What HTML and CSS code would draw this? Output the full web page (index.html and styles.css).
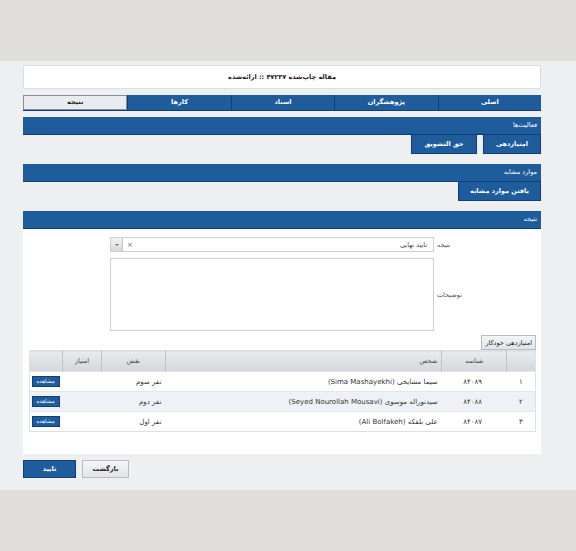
FILE: index.html
```html
<!DOCTYPE html>
<html lang="fa" dir="rtl">
<head>
    <meta charset="UTF-8">
    <title>مقاله چاپ‌شده</title>
    <link rel="stylesheet" href="styles.css">
</head>
<body>
    <div class="page">
        <div class="wrap">
            <div class="title">مقاله چاپ‌شده ۴۷۲۳۷ :: ارائه‌شده</div>

            <div class="tabs">
                <div class="tab">اصلی</div>
                <div class="tab">پژوهشگران</div>
                <div class="tab">اسناد</div>
                <div class="tab">کارها</div>
                <div class="tab active">نتیجه</div>
            </div>

            <div class="section">
                <div class="sec-head">فعالیت‌ها</div>
                <div class="actions">
                    <button class="btn-blue w58">امتیازدهی</button>
                    <button class="btn-blue w66">حق التشویق</button>
                </div>
            </div>

            <div class="section">
                <div class="sec-head">موارد مشابه</div>
                <div class="actions">
                    <button class="btn-blue w83">یافتن موارد مشابه</button>
                </div>
            </div>

            <div class="section">
                <div class="sec-head">نتیجه</div>
                <div class="panel">
                    <div class="form-row">
                        <label class="lbl">نتیجه</label>
                        <div class="select">
                            <span class="sel-text">تایید نهایی</span>
                            <span class="sel-clear">×</span>
                            <span class="sel-arrow"></span>
                        </div>
                    </div>
                    <div class="form-row">
                        <label class="lbl">توضیحات</label>
                        <textarea class="notes"></textarea>
                    </div>

                    <div class="auto-row">
                        <button class="btn-light">امتیازدهی خودکار</button>
                    </div>

                    <table class="grid">
                        <thead>
                            <tr>
                                <th class="c-num"></th>
                                <th class="c-id">شناسه</th>
                                <th class="c-person">شخص</th>
                                <th class="c-role">نقش</th>
                                <th class="c-score">امتیاز</th>
                                <th class="c-act"></th>
                            </tr>
                        </thead>
                        <tbody>
                            <tr>
                                <td class="c-num">۱</td>
                                <td class="c-id">۸۴۰۸۹</td>
                                <td>سیما مشایخی (Sima Mashayekhi)</td>
                                <td>نفر سوم</td>
                                <td></td>
                                <td class="c-act"><button class="view">مشاهده</button></td>
                            </tr>
                            <tr class="alt">
                                <td class="c-num">۲</td>
                                <td class="c-id">۸۴۰۸۸</td>
                                <td>سیدنوراله موسوی (Seyed Nourollah Mousavi)</td>
                                <td>نفر دوم</td>
                                <td></td>
                                <td class="c-act"><button class="view">مشاهده</button></td>
                            </tr>
                            <tr>
                                <td class="c-num">۳</td>
                                <td class="c-id">۸۴۰۸۷</td>
                                <td>علی بلفکه (Ali Bolfakeh)</td>
                                <td>نفر اول</td>
                                <td></td>
                                <td class="c-act"><button class="view">مشاهده</button></td>
                            </tr>
                        </tbody>
                    </table>
                </div>
            </div>

            <div class="footer">
                <button class="btn-light back">بازگشت</button>
                <button class="btn-blue ok">تایید</button>
            </div>
        </div>
    </div>
</body>
</html>
```

FILE: styles.css
```css
:root {
    --blue: #1e5c9c;
    --blue-dark: #0e3f78;
    --text: #333;
}

* {
    box-sizing: border-box;
    font-family: 'DejaVu Sans', sans-serif;
}

body {
    margin: 0;
    background: #e0dfdb;
    color: var(--text);
}

.page {
    margin-top: 61px;
    height: 429px;
    background: #eeeff0;
    padding: 4px 35px 0 23px;
}

.title {
    height: 24px;
    line-height: 22px;
    background: #fff;
    border: 1px solid #d6dee8;
    border-radius: 2px;
    text-align: center;
    font-size: 6.5px;
    font-weight: bold;
    color: #222;
}

/* تب‌ها */
.tabs {
    display: flex;
    margin-top: 6px;
    height: 16px;
    background: var(--blue);
    border-bottom: 1px solid var(--blue-dark);
}

.tab {
    flex: 1;
    text-align: center;
    font-size: 6.5px;
    font-weight: bold;
    line-height: 15px;
    color: #fff;
    border-left: 1px solid var(--blue-dark);
}

.tab.active {
    background: #e9ecef;
    color: #222;
    border: 1px solid #8a8f96;
    line-height: 13px;
}

.section {
    margin-top: 6px;
}

.section + .section {
    margin-top: 10px;
}

.sec-head {
    height: 18px;
    line-height: 17px;
    padding-right: 4px;
    background: var(--blue);
    border-bottom: 1px solid var(--blue-dark);
    color: #fff;
    font-size: 6.5px;
}

.actions {
    display: flex;
    gap: 6px;
}

button {
    cursor: pointer;
    padding: 0;
}

.btn-blue {
    height: 19px;
    background: var(--blue);
    border: 1px solid var(--blue-dark);
    border-top: none;
    color: #fff;
    font-size: 6.5px;
    font-weight: bold;
}

.w58 { width: 58px; }
.w66 { width: 66px; }
.w83 { width: 83px; }

.panel {
    height: 225px;
    background: #fff;
    padding: 8px 5px 0 6px;
}

.form-row {
    display: flex;
    align-items: center;
    margin-bottom: 6px;
}

.lbl {
    width: 102px;
    text-align: left;
    padding-left: 3px;
    font-size: 6.5px;
    color: #555;
}

.select {
    width: 324px;
    height: 15px;
    border: 1px solid #cfcfcf;
    display: flex;
    align-items: center;
    background: #fff;
}

.sel-text {
    flex: 1;
    padding-right: 6px;
    font-size: 6.5px;
    color: #444;
}

.sel-clear {
    font-size: 7px;
    color: #666;
    margin-left: 4px;
}

.sel-arrow {
    width: 12px;
    height: 13px;
    background: linear-gradient(#f3f3f3, #d8d8d8);
    border-right: 1px solid #c4c4c4;
    position: relative;
}

.sel-arrow::after {
    content: "";
    position: absolute;
    left: 4px;
    top: 6px;
    border: 2px solid transparent;
    border-top: 2px solid #777;
}

.notes {
    width: 324px;
    height: 73px;
    border: 1px solid #cfcfcf;
    resize: none;
    margin: 0;
}

.auto-row {
    display: flex;
    margin-top: -2px;
}

.btn-light {
    height: 15px;
    padding: 0 3px;
    background: linear-gradient(#f4f5f6, #e2e5e8);
    border: 1px solid #b9bdc2;
    color: #222;
    font-size: 6.5px;
}

/* جدول */
.grid {
    width: 507px;
    border-collapse: collapse;
    font-size: 7px;
    border: 1px solid #dde1e5;
}

.grid th {
    height: 21px;
    background: linear-gradient(#e9ecee, #d4d8dc);
    border-left: 1px solid #c0c5ca;
    font-weight: normal;
    font-size: 6.5px;
    color: #444;
    text-align: center;
}

.grid th.c-person {
    text-align: right;
    padding-right: 4px;
}

.grid th:last-child {
    border-left: none;
}

.grid td {
    height: 20px;
    border-top: 1px solid #e3e6e9;
    text-align: right;
    padding-right: 4px;
    color: #333;
}

.grid tr.alt td {
    background: #eef2f6;
}

.grid td.c-num {
    text-align: center;
    padding: 0;
}

.grid td.c-id {
    text-align: center;
}

.c-num { width: 29px; }
.c-id { width: 65px; }
.c-person { width: 277px; }
.c-role { width: 64px; }
.c-score { width: 39px; }
.c-act { width: 33px; }

.grid td.c-act {
    padding: 0 3px 0 0;
}

.view {
    width: 28px;
    height: 11px;
    background: var(--blue);
    border: 1px solid var(--blue-dark);
    color: #fff;
    font-size: 5.5px;
    line-height: 9px;
    display: block;
}

.footer {
    display: flex;
    justify-content: flex-end;
    gap: 6px;
    margin-top: 6px;
}

.footer .back {
    width: 47px;
    height: 18px;
    font-weight: bold;
}

.footer .ok {
    width: 53px;
    height: 18px;
    border-top: 1px solid var(--blue-dark);
}
```
